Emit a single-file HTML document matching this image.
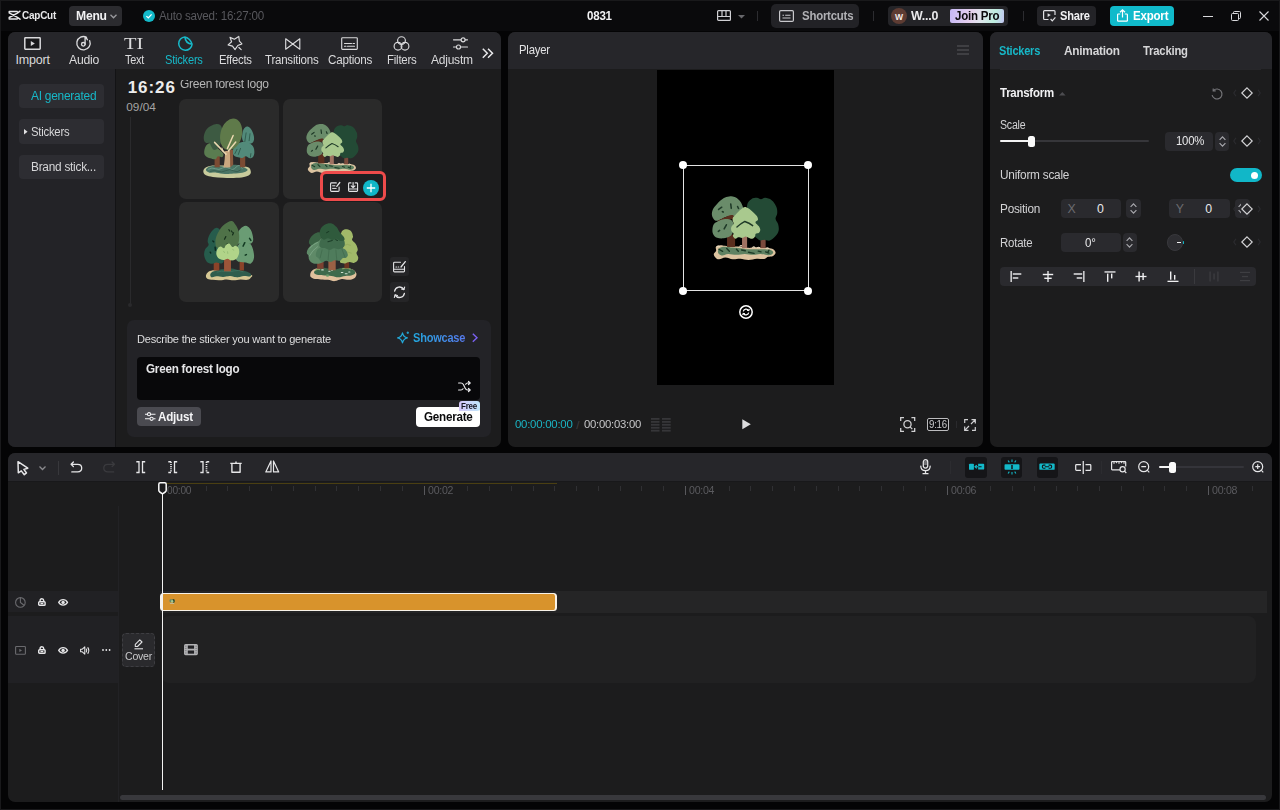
<!DOCTYPE html>
<html><head><meta charset="utf-8"><title>CapCut</title>
<style>
*{box-sizing:border-box;margin:0;padding:0}
html,body{width:1280px;height:810px;overflow:hidden;background:#040405;font-family:"Liberation Sans",sans-serif;color:#e6e6e8;font-size:12px}
.abs{position:absolute}
.panel{position:absolute;background:#1c1c1d;border-radius:7px;overflow:hidden}
.hdr{position:absolute;left:0;top:0;right:0;background:#232327}
svg{position:absolute;overflow:visible}
.t{position:absolute;white-space:nowrap;line-height:1}
.card{position:absolute;background:#2a2a2a;border-radius:7px;overflow:hidden}
.inp{position:absolute;background:#2a2a2e;border-radius:4px}

</style></head><body>
<div class="abs" style="left:0;top:0;width:1280px;height:810px;border:1px solid #19191b;pointer-events:none"></div>
<div id="topbar" class="abs" style="left:1px;top:1px;width:1278px;height:29.500px;background:#0a0a0c"></div><div class="abs" style="left:0;top:0;width:1280px;height:32px">
<svg style="left:7.5px;top:10px" width="13" height="10.5" viewBox="0 0 13 10.5" fill="none" stroke="#e8e8ea" stroke-width="1.45" stroke-linejoin="round" stroke-linecap="round"><path d="M1.2 1.5H9.2M1.2 8.9H9.2M1.2 1.5V2.9L9.4 7.3L12 9.2M1.2 8.9V7.5L9.4 3.1L12 1.2"/></svg>
<div class="t" style="left:22.0px;top:10.1px;font-size:11.5px;font-weight:bold;color:#e8e8ea;letter-spacing:-0.25px;transform:scaleX(0.865);transform-origin:0 0;">CapCut</div>
<div class="abs" style="left:69px;top:6px;width:53px;height:20px;background:#2b2b2f;border-radius:4px"></div>
<div class="t" style="left:76.0px;top:10.1px;font-size:12.5px;font-weight:bold;color:#f2f2f4;letter-spacing:-0.25px;transform:scaleX(0.972);transform-origin:0 0;">Menu</div>
<svg style="left:109.5px;top:13.5px" width="7" height="5" viewBox="0 0 7 5" fill="none" stroke="#9a9a9e" stroke-width="1.3"><path d="M0.5 0.8L3.5 3.8L6.5 0.8"/></svg>
<svg style="left:143px;top:10px" width="12" height="12" viewBox="0 0 12 12"><circle cx="6" cy="6" r="6" fill="#13b9c9"/><path d="M3.4 6.1L5.3 7.9L8.6 4.4" fill="none" stroke="#fff" stroke-width="1.3"/></svg>
<div class="t" style="left:159.3px;top:10.0px;font-size:12px;color:#58585d;letter-spacing:-0.25px;transform:scaleX(0.968);transform-origin:0 0;">Auto saved: 16:27:00</div>
<div class="t" style="left:586.8px;top:10.1px;font-size:12.5px;font-weight:bold;color:#f2f2f4;letter-spacing:-0.25px;transform:scaleX(0.924);transform-origin:0 0;">0831</div>
<svg style="left:717px;top:10px" width="14" height="11" viewBox="0 0 14 11" fill="none" stroke="#d0d0d4" stroke-width="1.2"><rect x="0.6" y="0.6" width="12.8" height="9.8" rx="1"/><path d="M0.6 6.5H13.4M5 0.6V6.5M9 0.6V6.5"/></svg>
<svg style="left:737.5px;top:14.5px" width="7" height="3.5" viewBox="0 0 7 3.5"><path d="M0 0H7L3.5 3.5Z" fill="#67676b"/></svg>
<div class="abs" style="left:757px;top:11px;width:1px;height:10px;background:#2c2c30"></div>
<div class="abs" style="left:771px;top:4px;width:88px;height:24px;background:#222226;border-radius:5px"></div>
<svg style="left:779px;top:10px" width="15" height="12" viewBox="0 0 15 12" fill="none" stroke="#c8c8cc" stroke-width="1.2"><rect x="0.6" y="0.6" width="13.8" height="10.8" rx="1.2"/><path d="M3.5 5.2H5M6.2 5.2H11.5M3.5 8H11.5" stroke-width="1.1"/></svg>
<div class="t" style="left:801.5px;top:10.1px;font-size:12.5px;font-weight:bold;color:#b0b0b4;letter-spacing:-0.25px;transform:scaleX(0.914);transform-origin:0 0;">Shortcuts</div>
<div class="abs" style="left:873px;top:11px;width:1px;height:10px;background:#2c2c30"></div>
<div class="abs" style="left:888px;top:6px;width:120px;height:20px;background:#242428;border-radius:4px"></div>
<div class="abs" style="left:891px;top:8px;width:16px;height:16px;border-radius:8px;background:#5e3c33"></div>
<div class="t" style="left:895.0px;top:12.7px;font-size:8.5px;font-weight:bold;color:#f4ecea;letter-spacing:0.00px;">W</div>
<div class="t" style="left:910.7px;top:10.1px;font-size:12.5px;font-weight:bold;color:#e8e8ea;letter-spacing:-0.25px;transform:scaleX(0.994);transform-origin:0 0;">W...0</div>
<div class="abs" style="left:950px;top:9px;width:54px;height:14px;border-radius:2px;background:linear-gradient(100deg,#c6b8f6 0%,#e6d0ee 38%,#dfe6ec 58%,#bdeede 82%,#c2c4f2 100%)"></div>
<div class="t" style="left:955.0px;top:10.4px;font-size:12px;font-weight:bold;color:#0a0a0c;letter-spacing:-0.25px;transform:scaleX(0.962);transform-origin:0 0;">Join Pro</div>
<div class="abs" style="left:1023px;top:11px;width:1px;height:10px;background:#2c2c30"></div>
<div class="abs" style="left:1037px;top:6px;width:59px;height:20px;background:#232327;border-radius:4px"></div>
<svg style="left:1043px;top:10px" width="13" height="12" viewBox="0 0 13 12" fill="none" stroke="#e0e0e4" stroke-width="1.2"><path d="M12 5V1.6Q12 0.7 11.1 0.7H1.5Q0.6 0.7 0.6 1.6V8.6Q0.6 9.5 1.5 9.5H5.5"/><path d="M4.6 3.2V7L7.8 5.1Z" fill="#e0e0e4" stroke="none"/><path d="M7.6 9L9.3 10.8L12.4 7.4"/></svg>
<div class="t" style="left:1060.0px;top:10.1px;font-size:12.5px;font-weight:bold;color:#f2f2f4;letter-spacing:-0.25px;transform:scaleX(0.889);transform-origin:0 0;">Share</div>
<div class="abs" style="left:1110px;top:6px;width:64px;height:20px;background:#10bacb;border-radius:4px"></div>
<svg style="left:1117px;top:9px" width="11" height="13" viewBox="0 0 11 13" fill="none" stroke="#fff" stroke-width="1.2"><path d="M3.2 5H1.4Q0.6 5 0.6 5.8V11.4Q0.6 12.2 1.4 12.2H9.6Q10.4 12.2 10.4 11.4V5.8Q10.4 5 9.6 5H7.8"/><path d="M5.5 8.6V1M3 3.3L5.5 0.9L8 3.3"/></svg>
<div class="t" style="left:1133.0px;top:10.1px;font-size:12.5px;font-weight:bold;color:#ffffff;letter-spacing:-0.25px;transform:scaleX(0.926);transform-origin:0 0;">Export</div>
<div class="abs" style="left:1203px;top:16px;width:10px;height:1px;background:#d8d8dc"></div>
<svg style="left:1231px;top:11px" width="10" height="10" viewBox="0 0 10 10" fill="none" stroke="#d8d8dc" stroke-width="1"><rect x="0.5" y="2.5" width="7" height="7" rx="1"/><path d="M2.5 2.5V1.5Q2.5 0.5 3.5 0.5H8.5Q9.5 0.5 9.5 1.5V6.5Q9.5 7.5 8.5 7.5H7.5"/></svg>
<svg style="left:1259px;top:11px" width="10" height="10" viewBox="0 0 10 10" fill="none" stroke="#d8d8dc" stroke-width="1.1"><path d="M0.5 0.5L9.5 9.5M9.5 0.5L0.5 9.5"/></svg>
</div>
<div class="panel" style="left:8px;top:32px;width:493px;height:415px"><div class="abs" style="left:-8px;top:-32px;width:1280px;height:810px">
<div class="abs" style="left:8px;top:32px;width:493px;height:37px;background:#26262a"></div>
<div class="abs" style="left:8px;top:69px;width:107px;height:378px;background:#232327"></div>
<div class="abs" style="left:115px;top:69px;width:1px;height:378px;background:#131315"></div>
<svg style="left:24.200px;top:36.900px" width="17" height="13" viewBox="0 0 17 13" fill="none" stroke="#dadadc" stroke-width="1.500" stroke-linejoin="round"><rect x="0.800" y="0.800" width="15.400" height="11.400" rx="0.600" fill="#19191b"/><path d="M6.800 4.100V8.900L10.800 6.500Z" fill="#dadadc" stroke="none"/></svg>
<div class="t" style="left:15.4px;top:54.4px;font-size:12.5px;color:#dadadc;letter-spacing:-0.17px;">Import</div>
<svg style="left:76.100px;top:36.400px" width="15" height="15" viewBox="0 0 15 15" fill="none" stroke="#dadadc" stroke-width="1.350" stroke-linejoin="round" stroke-linecap="round"><path d="M10.600 1.300A6.700 6.700 0 1 0 13.700 4.700"/><circle cx="7.300" cy="8.300" r="1.800"/><path d="M9.100 8.300V1.500Q10.600 1.800 11.400 3.800"/></svg>
<div class="t" style="left:68.5px;top:54.0px;font-size:12.5px;color:#dadadc;letter-spacing:-0.25px;transform:scaleX(0.978);transform-origin:0 0;">Audio</div>
<div class="t" style="left:124.3px;top:35.1px;font-size:17.2px;font-family:'Liberation Serif',serif;color:#dadadc;letter-spacing:0.00px;transform:scaleX(1.19);transform-origin:0 0;">TI</div>
<div class="t" style="left:124.6px;top:54.0px;font-size:12.5px;color:#dadadc;letter-spacing:-0.25px;transform:scaleX(0.875);transform-origin:0 0;">Text</div>
<svg style="left:177.500px;top:36px" width="15" height="15" viewBox="0 0 15 15" fill="none" stroke="#17b8c8" stroke-width="1.500" stroke-linejoin="round" stroke-linecap="round"><path d="M14.100 8.200A6.700 6.700 0 1 1 6.900 0.900Q12.300 2.300 14.100 8.200M6.900 0.900Q7.400 7.700 14.100 8.200"/></svg>
<div class="t" style="left:165.4px;top:54.0px;font-size:12.5px;color:#17b8c8;letter-spacing:-0.25px;transform:scaleX(0.888);transform-origin:0 0;">Stickers</div>
<svg style="left:227px;top:35px" width="16" height="16" viewBox="0 0 16 16" fill="none" stroke="#dadadc" stroke-width="1.150" stroke-linejoin="round" stroke-linecap="round"><path d="M3 2.400L7.400 4.250L11.750 1.400L12.400 6.100L14.900 8.900L10.800 10.500L8 14.600L5.500 11.100L1.100 9.900L4.600 6.750Z"/><path d="M11.900 12.500L14.200 14.600" stroke-width="1.200"/></svg>
<div class="t" style="left:218.5px;top:54.0px;font-size:12.5px;color:#dadadc;letter-spacing:-0.25px;transform:scaleX(0.905);transform-origin:0 0;">Effects</div>
<svg style="left:285px;top:37.500px" width="15.500" height="12" viewBox="0 0 15.500 12" fill="none" stroke="#dadadc" stroke-width="1.15" stroke-linejoin="round" stroke-linecap="round"><path d="M0.700 0.800V11.200L7.750 6ZM14.800 0.800V11.200L7.750 6Z"/></svg>
<div class="t" style="left:265.3px;top:54.0px;font-size:12.5px;color:#dadadc;letter-spacing:-0.25px;transform:scaleX(0.923);transform-origin:0 0;">Transitions</div>
<svg style="left:341px;top:37px" width="17" height="13" viewBox="0 0 17 13" fill="none" stroke="#dadadc" stroke-width="1.15" stroke-linejoin="round" stroke-linecap="round"><rect x="0.700" y="0.700" width="15.600" height="11.600" rx="0.800"/><path d="M3.500 6.500H10.500M12 6.500H13.500M3.500 9.300H5M6.500 9.300H13.500" stroke-width="1.100"/></svg>
<div class="t" style="left:327.8px;top:54.0px;font-size:12.5px;color:#dadadc;letter-spacing:-0.25px;transform:scaleX(0.933);transform-origin:0 0;">Captions</div>
<svg style="left:393px;top:36px" width="17" height="15" viewBox="0 0 17 15" fill="none" stroke="#dadadc" stroke-width="1.15" stroke-linejoin="round" stroke-linecap="round"><circle cx="8.500" cy="4.600" r="3.900"/><circle cx="5" cy="10.200" r="3.900"/><circle cx="12" cy="10.200" r="3.900"/></svg>
<div class="t" style="left:386.9px;top:54.0px;font-size:12.5px;color:#dadadc;letter-spacing:-0.25px;transform:scaleX(0.916);transform-origin:0 0;">Filters</div>
<svg style="left:452.500px;top:37px" width="15" height="13" viewBox="0 0 15 13" fill="none" stroke="#dadadc" stroke-width="1.15" stroke-linejoin="round" stroke-linecap="round"><path d="M0.500 2.800H8M12.200 2.800H14.500M0.500 10H3.400M7.600 10H14.500"/><circle cx="10.100" cy="2.800" r="2"/><circle cx="5.500" cy="10" r="2"/></svg>
<div class="t" style="left:431.2px;top:54.0px;font-size:12.5px;color:#dadadc;letter-spacing:-0.25px;transform:scaleX(0.962);transform-origin:0 0;">Adjustm</div>
<svg style="left:482px;top:48px" width="11.500" height="10.500" viewBox="0 0 11.500 10.500" fill="none" stroke="#e8e8ea" stroke-width="1.500" stroke-linejoin="miter"><path d="M0.800 0.800L5.300 5.250L0.800 9.700M6 0.800L10.500 5.250L6 9.700"/></svg>
<div class="abs" style="left:19px;top:83.5px;width:85px;height:24.500px;background:#2d2d32;border-radius:4px"></div>
<div class="abs" style="left:19px;top:119px;width:85px;height:24.500px;background:#2d2d32;border-radius:4px"></div>
<div class="abs" style="left:19px;top:154.5px;width:85px;height:24.500px;background:#2d2d32;border-radius:4px"></div>
<div class="t" style="left:31.1px;top:90.1px;font-size:12px;color:#17b8c8;letter-spacing:-0.25px;transform:scaleX(0.993);transform-origin:0 0;">AI generated</div>
<svg style="left:23.600px;top:129.300px" width="3.600" height="5.600" viewBox="0 0 3.600 5.600"><path d="M0 0L3.600 2.800L0 5.600Z" fill="#e0e0e2"/></svg>
<div class="t" style="left:31.1px;top:125.7px;font-size:12px;color:#d6d6d8;letter-spacing:-0.25px;transform:scaleX(0.943);transform-origin:0 0;">Stickers</div>
<div class="t" style="left:31.1px;top:161.3px;font-size:12px;color:#d6d6d8;letter-spacing:-0.25px;transform:scaleX(0.986);transform-origin:0 0;">Brand stick...</div>
<div class="abs" style="left:116px;top:79.500px;width:385px;height:19px;overflow:hidden"><div class="abs" style="left:-116px;top:-79.500px;width:1280px;height:810px">
<div class="t" style="left:127.7px;top:78.5px;font-size:17px;font-weight:bold;color:#ececec;letter-spacing:0.95px;">16:26</div>
<div class="t" style="left:179.8px;top:77.7px;font-size:12.3px;color:#b6b6b6;letter-spacing:-0.25px;transform:scaleX(0.978);transform-origin:0 0;">Green forest logo</div>
</div></div>
<div class="t" style="left:126.3px;top:101.5px;font-size:11.8px;color:#a4a4a4;letter-spacing:-0.01px;">09/04</div>
<div class="abs" style="left:129.700px;top:117px;width:1.200px;height:187px;background:#2a2a2c"></div>
<div class="abs" style="left:128.300px;top:303px;width:4px;height:4px;border-radius:2px;background:#2a2a2c"></div>
<div class="card" style="left:179px;top:99px;width:100px;height:100px"><svg style="left:20px;top:14px" width="60" height="70" viewBox="0 0 694 810">
<path d="M50 680C48 664 55 647 70 635C85 623 106 617 130 612C154 607 147 607 200 607C253 607 354 609 420 612C486 615 527 614 560 625C593 636 593 654 598 670C603 686 599 702 585 715C571 728 554 735 520 742C486 749 444 751 400 752C356 753 324 752 280 750C236 748 197 746 160 740C123 734 100 731 80 720C60 709 52 696 50 680Z" fill="#c8cb9c"/>
<path d="M80 660C78 648 92 634 110 625C128 616 152 612 180 610C208 608 232 612 260 615C288 618 304 628 330 625C356 622 374 603 400 600C426 597 444 603 470 610C496 617 524 630 540 640C556 650 567 656 560 665C553 674 529 684 500 690C471 696 437 697 400 700C363 703 337 707 300 705C263 703 233 693 200 690C167 687 142 696 120 690C98 684 82 672 80 660Z" fill="#4a7565"/>
<path d="M110 650q40-25 80-5t80-8 80 4 80-15 70 15" stroke="#78a593" stroke-width="9" stroke-linecap="round" stroke-linejoin="round" fill="none"/>
<path d="M130 675q50-18 90 0t90-8 90 2 80-8" stroke="#33584a" stroke-width="9" stroke-linecap="round" stroke-linejoin="round" fill="none"/>
<rect x="180" y="480" width="60" height="148" fill="#7b4b33"/>
<rect x="475" y="490" width="60" height="138" fill="#7b4b33"/>
<path d="M60 460C59 440 64 410 75 390C86 370 101 354 120 350C139 346 160 357 180 370C200 383 212 402 230 420C248 438 273 454 280 470C287 486 281 504 270 510C259 516 235 495 220 500C205 505 206 530 190 535C174 540 150 531 130 525C110 519 93 512 80 500C67 488 61 480 60 460Z" fill="#5a7c50"/>
<path d="M55 300C53 277 58 246 70 220C82 194 98 176 120 160C142 144 167 134 190 130C213 126 230 127 245 140C260 153 266 172 270 200C274 228 272 262 268 290C264 318 260 328 250 350C240 372 230 396 215 410C200 424 184 430 170 425C156 420 149 400 140 385C131 370 131 352 120 345C109 338 92 353 80 345C68 337 57 323 55 300Z" fill="#3d5a42"/>
<path d="M500 300C495 277 500 244 505 220C510 196 518 181 530 170C542 159 555 154 570 160C585 166 598 180 610 200C622 220 631 246 635 270C639 294 638 314 630 330C622 346 608 352 590 355C572 358 546 355 530 345C514 335 505 323 500 300Z" fill="#528a7a"/>
<path d="M390 440C394 421 404 398 420 380C436 362 454 347 480 340C506 333 534 333 560 340C586 347 605 362 620 380C635 398 638 418 640 440C642 462 639 484 630 500C621 516 606 525 590 525C574 525 556 501 540 500C524 499 518 518 500 520C482 522 458 516 440 510C422 504 409 498 400 485C391 472 386 459 390 440Z" fill="#528a7a"/>
<path d="M545 230l-15 100M590 240l-10 80M440 420l-25 50M480 410l-25 70M600 470l-5 40" stroke="#2f5c4d" stroke-width="11" stroke-linecap="round" stroke-linejoin="round" fill="none"/>
<ellipse cx="372" cy="248" rx="124" ry="186" fill="#5f7a4a" transform="rotate(14 372 248)"/>
<path d="M352 425H392L396 600L362 632Z" fill="#8a5a3e"/>
<path d="M303 440H357L362 632H285Q300 540 303 440Z" fill="#caa880"/>
<path d="M312 476L180 340M328 412L395 260M340 440L425 335" stroke="#ead8b0" stroke-width="17" stroke-linecap="round" stroke-linejoin="round" fill="none"/>
<path d="M265 405l10 35" stroke="#ead8b0" stroke-width="12" stroke-linecap="round" stroke-linejoin="round" fill="none"/>
</svg></div>
<div class="card" style="left:283px;top:99px;width:99px;height:100px"><svg style="left:17.8px;top:20.1px" width="62.300" height="58.400" viewBox="0 0 864 810">
<path d="M95 690C97 677 116 669 120 655C124 641 110 626 118 615C126 604 147 599 165 597C183 595 194 601 215 603C236 605 250 608 280 610C310 612 345 609 380 612C415 615 440 624 470 625C500 626 514 618 545 618C576 618 612 623 640 625C668 627 681 624 700 628C719 632 734 635 745 645C756 655 764 668 762 680C760 692 750 704 735 712C720 720 697 716 680 722C663 728 662 741 640 745C618 749 591 740 560 742C529 744 503 756 470 756C437 756 411 743 380 742C349 741 329 751 300 748C271 745 248 728 220 728C192 728 170 749 150 748C130 747 120 736 110 725C100 714 93 703 95 690Z" fill="#dcc3a0"/>
<path d="M140 660C142 648 146 634 160 625C174 616 189 613 215 612C241 611 270 619 300 622C330 625 349 625 380 628C411 631 437 638 470 640C503 642 527 640 560 640C593 640 622 638 650 640C678 642 699 643 715 650C731 657 740 670 735 680C730 690 715 703 690 705C665 707 631 691 600 690C569 689 551 700 520 700C489 700 463 690 430 690C397 690 373 700 340 700C307 700 278 689 250 690C222 691 208 708 190 708C172 708 159 699 150 690C141 681 138 672 140 660Z" fill="#5f8262"/>
<path d="M150 640l40 22M235 632l28 30M340 640l20 22M395 648l40 8M470 672l60 12M575 660l30 8M655 668l35 14M690 650l-8 18" stroke="#1c3a26" stroke-width="15" stroke-linecap="round" fill="none"/>
<path d="M128 612q14-14 30 0M375 608q14-14 30 0M515 620q12-12 24 0M565 624q14-12 28 0M660 628q14-10 28 2" stroke="#eadcc0" stroke-width="11" fill="none" stroke-linecap="round"/>
<rect x="238" y="480" width="87" height="135" fill="#5a2e1e"/>
<rect x="600" y="530" width="55" height="98" fill="#7a4a3c"/>
<path d="M455 165C460 128 481 115 500 100C519 85 541 85 560 85C579 85 588 100 605 100C622 100 629 83 650 85C671 87 698 93 720 110C742 127 759 154 770 180C781 206 781 226 780 250C779 274 760 288 762 310C764 332 784 346 790 370C796 394 800 416 795 440C790 464 777 481 760 500C743 519 722 538 700 545C678 552 658 538 640 538C622 538 615 548 600 545C585 542 575 534 560 520C545 506 536 510 520 470C504 430 482 356 470 300C458 244 450 202 455 165Z" fill="#234a35"/>
<path d="M75 270C73 251 75 232 85 210C95 188 109 172 130 150C151 128 176 105 200 90C224 75 238 73 260 70C282 67 300 68 320 75C340 82 354 93 370 110C386 127 397 148 405 170C413 192 417 211 412 230C407 249 401 262 380 272C359 282 326 279 300 282C274 285 262 282 240 287C218 292 200 304 180 312C160 320 146 331 130 332C114 333 105 326 95 315C85 304 77 289 75 270Z" fill="#6a8c6a"/>
<path d="M140 332C152 324 218 291 240 283C262 275 296 268 305 272C314 276 314 306 305 312C296 318 261 314 240 318C219 322 163 343 150 345C137 347 128 340 140 332Z" fill="#5a2e1e"/>
<path d="M80 430C81 410 84 387 95 370C106 353 121 347 140 337C159 327 178 321 200 317C222 313 242 312 260 317C278 322 290 327 300 342C310 357 312 378 312 400C312 422 308 442 300 460C292 478 288 489 270 500C252 511 226 519 200 522C174 525 150 523 130 515C110 507 99 496 90 480C81 464 79 450 80 430Z" fill="#6a8c6a"/>
<path d="M147 210l34-24M278 152l6 46M352 178l10 22M207 420l24-44M144 446l14-10M188 234l10 4" stroke="#1f3a28" stroke-width="17" stroke-linecap="round" fill="none"/>
<rect x="400" y="470" width="55" height="158" fill="#a07262"/>
<path d="M430 183C442 183 457 190 472 200C487 210 505 226 520 240C535 254 551 268 560 282C569 296 574 311 572 322C570 333 543 338 545 350C547 362 573 378 582 392C591 406 597 420 597 432C597 444 588 458 580 465C572 472 555 466 548 472C541 478 546 493 540 502C534 511 522 525 510 527C498 529 482 519 470 515C458 511 452 502 440 502C428 502 413 516 400 517C387 518 372 508 360 510C348 512 340 529 330 527C320 525 306 510 302 500C298 490 311 480 308 470C305 460 288 452 284 440C280 428 280 412 284 400C288 388 308 377 310 365C312 353 299 341 298 330C297 319 297 308 302 298C307 288 319 280 330 268C341 256 358 236 370 225C382 214 390 207 400 200C410 193 418 183 430 183Z" fill="#a9c98e"/>
<path d="M345 400Q385 365 430 340Q478 355 515 385" stroke="#1f3a28" stroke-width="15" fill="none" stroke-linecap="round" stroke-linejoin="round"/>
</svg></div>
<div class="card" style="left:179px;top:202px;width:100px;height:100px"><svg style="left:20px;top:13px" width="60" height="70" viewBox="0 0 694 810">
<path d="M80 710C79 697 84 682 95 670C106 658 119 650 140 645C161 640 162 639 210 640C258 641 328 641 400 650C472 659 564 676 600 690C636 704 605 714 598 725C591 736 582 746 560 750C538 754 509 744 480 745C451 746 429 755 400 755C371 755 349 745 320 745C291 745 269 754 240 755C211 756 186 753 160 750C134 747 115 747 100 740C85 733 81 723 80 710Z" fill="#d6c894"/>
<path d="M130 690C132 678 142 665 160 655C178 645 204 640 230 635C256 630 272 628 300 625C328 622 351 617 380 620C409 623 431 634 460 640C489 646 515 643 540 650C565 657 589 669 598 680C607 691 604 707 590 712C576 717 548 703 520 705C492 707 469 722 440 722C411 722 389 706 360 705C331 704 309 716 280 717C251 718 224 709 200 710C176 711 163 726 150 722C137 718 128 702 130 690Z" fill="#2f5d4d"/>
<path d="M150 735q20-22 42 0 22-22 46-4M290 730q26-18 52 0M400 735q22-18 46 0 22-16 44 0M520 728q18-14 40 0" stroke="#d6c894" stroke-width="13" stroke-linecap="round" stroke-linejoin="round" fill="none"/>
<path d="M210 660q50-18 100-8t100-6 100 10" stroke="#3f7361" stroke-width="10" stroke-linecap="round" stroke-linejoin="round" fill="none"/>
<rect x="170" y="540" width="65" height="102" fill="#8b4329"/>
<rect x="470" y="520" width="50" height="122" fill="#8b4329"/>
<path d="M60 470C56 444 61 422 70 400C79 378 104 368 110 350C116 332 98 322 100 300C102 278 108 254 120 230C132 206 148 185 165 170C182 155 199 145 215 150C231 155 242 162 250 195C258 228 251 289 258 330C265 371 284 385 290 420C296 455 296 494 290 520C284 546 276 554 260 560C244 566 220 549 200 550C180 551 170 567 150 565C130 563 106 557 90 540C74 523 64 496 60 470Z" fill="#265c4c"/>
<path d="M160 300l10 10M186 372l4 36M130 430l5 10" stroke="#0d2a20" stroke-width="17" stroke-linecap="round" stroke-linejoin="round" fill="none"/>
<path d="M430 300C426 281 431 256 440 230C449 204 462 179 480 160C498 141 520 125 540 125C560 125 575 141 590 160C605 179 614 204 620 230C626 256 630 281 625 300C620 319 609 328 590 332C571 336 544 322 520 322C496 322 476 336 460 332C444 328 434 319 430 300Z" fill="#6a9c74"/>
<path d="M420 480C418 456 421 428 430 400C439 372 450 345 470 330C490 315 516 316 540 318C564 320 584 321 600 340C616 359 624 391 630 420C636 449 640 474 635 500C630 526 617 551 600 560C583 569 562 553 540 550C518 547 498 549 480 545C462 541 451 542 440 530C429 518 422 504 420 480Z" fill="#6a9c74"/>
<path d="M585 270l15 25M530 320l-20 40M535 465l13-7" stroke="#123a22" stroke-width="17" stroke-linecap="round" stroke-linejoin="round" fill="none"/>
<path d="M375 70C397 71 405 90 420 110C435 130 447 152 455 180C463 208 466 231 465 260C464 289 462 314 450 340C438 366 428 389 400 400C372 411 335 404 300 400C265 396 230 395 210 380C190 365 192 344 190 320C188 296 191 278 200 250C209 222 222 197 240 170C258 143 275 123 300 105C325 87 353 69 375 70Z" fill="#4f7248"/>
<path d="M345 170l10 15M375 185l10 15M400 205l-12 25M310 250l-15 30M325 335l10 15" stroke="#16301c" stroke-width="14" stroke-linecap="round" stroke-linejoin="round" fill="none"/>
<rect x="290" y="490" width="80" height="162" fill="#9b5539"/>
<path d="M200 440C201 424 206 404 215 390C224 376 236 366 250 365C264 364 279 388 290 385C301 382 299 360 310 350C321 340 336 326 350 330C364 334 372 365 385 370C398 375 407 353 420 355C433 357 447 366 455 380C463 394 466 412 465 430C464 448 458 464 450 480C442 496 435 507 420 515C405 523 386 527 370 525C354 523 345 506 330 505C315 504 306 519 290 520C274 521 255 517 240 510C225 503 217 493 210 480C203 467 199 456 200 440Z" fill="#b1d489"/>
<path d="M285 420l10 15M330 425l3 20M390 400l12 6" stroke="#8fb870" stroke-width="9" stroke-linecap="round" stroke-linejoin="round" fill="none"/>
</svg></div>
<div class="card" style="left:283px;top:202px;width:99px;height:100px"><svg style="left:19px;top:13px" width="60" height="70" viewBox="0 0 694 810">
<path d="M95 690C96 677 100 662 110 650C120 638 134 630 150 625C166 620 154 617 200 620C246 623 334 639 400 640C466 641 520 621 560 625C600 629 608 646 620 660C632 674 632 686 628 700C624 714 616 726 600 735C584 744 566 749 540 750C514 751 489 737 460 740C431 743 409 763 380 765C351 767 329 754 300 750C271 746 248 747 220 745C192 743 171 745 150 740C129 735 115 729 105 720C95 711 94 703 95 690Z" fill="#e1c19d"/>
<path d="M140 670C135 658 148 641 165 630C182 619 205 614 230 612C255 610 272 617 300 620C328 623 351 631 380 630C409 629 431 615 460 612C489 609 514 610 540 615C566 620 586 629 600 640C614 651 620 664 615 675C610 686 591 694 570 700C549 706 528 701 500 705C472 709 449 720 420 720C391 720 369 709 340 705C311 701 288 702 260 700C232 698 212 700 190 695C168 690 145 682 140 670Z" fill="#3f6a4c"/>
<path d="M155 640q25-18 50-8M470 622q45-12 90 4" stroke="#8aa868" stroke-width="13" stroke-linecap="round" stroke-linejoin="round" fill="none"/>
<path d="M228 635h18M310 650h14M342 640h10M455 665h18M500 680h22M540 660h14" stroke="#cfe0d0" stroke-width="12" stroke-linecap="round" stroke-linejoin="round" fill="none"/>
<ellipse cx="295" cy="700" rx="18" ry="14" fill="#6a9a6a"/>
<rect x="175" y="520" width="75" height="102" fill="#7b4131"/>
<rect x="490" y="520" width="55" height="97" fill="#6b3521"/>
<rect x="305" y="500" width="85" height="140" fill="#9b6145"/>
<path d="M440 540C438 524 444 499 450 470C456 441 468 411 470 380C472 349 464 328 460 300C456 272 448 252 450 230C452 208 457 192 470 180C483 168 502 163 520 165C538 167 557 174 570 190C583 206 588 232 590 250C592 268 574 274 580 290C586 306 613 320 625 340C637 360 644 382 645 400C646 418 629 424 630 440C631 456 648 474 650 490C652 506 649 518 640 530C631 542 616 552 600 555C584 558 568 544 550 545C532 546 516 558 500 560C484 562 471 559 460 555C449 551 442 556 440 540Z" fill="#a1b969"/>
<path d="M490 350q35-22 70 0M480 440q45-26 90 0" stroke="#93ab5e" stroke-width="11" stroke-linecap="round" stroke-linejoin="round" fill="none"/>
<path d="M55 440C54 425 60 408 70 390C80 372 95 358 110 340C125 322 134 303 150 290C166 277 182 270 200 270C218 270 239 266 250 290C261 314 259 358 260 400C261 442 262 492 255 520C248 548 237 547 220 555C203 563 180 566 160 565C140 564 125 560 110 550C95 540 86 525 80 510C74 495 80 483 75 470C70 457 56 455 55 440Z" fill="#5f8a68"/>
<path d="M80 320C78 304 87 279 100 260C113 241 132 226 150 215C168 204 186 195 200 200C214 205 224 223 225 240C226 257 219 277 205 292C191 307 167 312 150 322C133 332 123 347 110 347C97 347 82 336 80 320Z" fill="#3a6244"/>
<path d="M90 385q35-45 90-68M85 475q35-70 95-108" stroke="#7aa484" stroke-width="11" stroke-linecap="round" stroke-linejoin="round" fill="none"/>
<path d="M160 470C158 452 165 418 180 400C195 382 212 376 240 370C268 364 295 369 330 370C365 371 399 370 430 375C461 380 482 384 500 400C518 416 528 443 530 460C532 477 521 488 510 495C499 502 483 494 470 500C457 506 456 525 440 530C424 535 400 522 380 525C360 528 348 544 330 545C312 546 298 530 280 530C262 530 246 550 230 545C214 540 203 514 190 500C177 486 162 488 160 470Z" fill="#4f7c5c"/>
<path d="M232 405l-22 90M312 405l-10 115M392 405l10 115M462 395l34 90" stroke="#436e50" stroke-width="11" stroke-linecap="round" stroke-linejoin="round" fill="none"/>
<path d="M200 350C198 334 204 310 215 290C226 270 237 251 260 240C283 229 309 230 340 230C371 230 404 231 430 240C456 249 468 262 480 280C492 298 497 322 495 340C493 358 484 370 470 380C456 390 438 394 420 395C402 396 388 383 370 385C352 387 338 405 320 405C302 405 287 390 270 385C253 380 238 386 225 380C212 374 202 366 200 350Z" fill="#3f6a4c"/>
<path d="M205 200C208 180 214 158 230 140C246 122 268 107 290 100C312 93 330 93 350 100C370 107 385 124 400 140C415 156 415 170 430 190C445 210 469 232 480 250C491 268 497 281 490 290C483 299 456 303 440 300C424 297 416 277 400 275C384 273 368 291 350 290C332 289 318 271 300 270C282 269 266 289 250 285C234 281 223 266 215 250C207 234 202 220 205 200Z" fill="#2f5a3c"/>
<path d="M285 205l25-15M300 310l50-15M390 285l20 10" stroke="#1a3c26" stroke-width="12" stroke-linecap="round" stroke-linejoin="round" fill="none"/>
</svg></div>
<div class="abs" style="left:320px;top:171px;width:65.500px;height:30px;border:3px solid #ee4b4b;border-radius:6px;background:#1f1f21"></div>
<svg style="left:330px;top:182.300px" width="10.500" height="10" viewBox="0 0 10.500 10" fill="none" stroke="#e4e4e6" stroke-width="1.100" stroke-linejoin="round" stroke-linecap="round"><path d="M6.300 0.900H1.500Q0.600 0.900 0.600 1.800V8.500Q0.600 9.400 1.500 9.400H8.200Q9.100 9.400 9.100 8.500V5"/><path d="M2.600 3.800H5M2.600 6.400H6.200" stroke-width="1"/><path d="M9.800 0.500L6.800 4.400" stroke-width="1.300"/></svg>
<svg style="left:347.700px;top:182.300px" width="10.200" height="10" viewBox="0 0 10.200 10" fill="none" stroke="#e4e4e6" stroke-width="1.100" stroke-linejoin="round" stroke-linecap="round"><path d="M3 0.900H1.500Q0.600 0.900 0.600 1.800V8.500Q0.600 9.400 1.500 9.400H8.700Q9.600 9.400 9.600 8.500V1.800Q9.600 0.900 8.700 0.900H7.200"/><path d="M5.100 0.500V5.400M3.200 3.800L5.100 5.700L7 3.800" stroke-width="1.200"/><path d="M0.600 7H9.600" stroke-width="1"/></svg>
<svg style="left:362.500px;top:179.500px" width="16" height="16" viewBox="0 0 16 16"><circle cx="8" cy="8" r="8" fill="#11b7c8"/><path d="M8 3.800V12.200M3.800 8H12.200" stroke="#fff" stroke-width="1.300"/></svg>
<div class="abs" style="left:389.500px;top:256.500px;width:19.500px;height:19.500px;background:#252527;border-radius:3px"></div>
<svg style="left:393px;top:260.500px" width="13" height="11.500" viewBox="0 0 13 11.500" fill="none" stroke="#e4e4e6" stroke-width="1.100" stroke-linejoin="round" stroke-linecap="round"><path d="M7.500 1.300H1.500Q0.600 1.300 0.600 2.200V10Q0.600 10.900 1.500 10.900H10.600Q11.500 10.900 11.500 10V5.500"/><path d="M0.600 8.300H11.500" /><path d="M3 6H3.500M5.200 6H5.700" stroke-width="1.200"/><path d="M12.300 0.600L8 6" stroke-width="1.300"/></svg>
<div class="abs" style="left:389.500px;top:282px;width:19.500px;height:19.500px;background:#252527;border-radius:3px"></div>
<svg style="left:392.700px;top:285.500px" width="13" height="12.500" viewBox="0 0 13 12.500" fill="none" stroke="#e4e4e6" stroke-width="1.100" stroke-linejoin="round" stroke-linecap="round" stroke-width="1.300"><path d="M1.600 5.200A5 5 0 0 1 10.800 3.400M11.400 7.300A5 5 0 0 1 2.200 9.100" stroke-width="1.300"/><path d="M11.600 1.200L10.900 3.700L8.500 3M1.400 11.300L2.100 8.800L4.500 9.500" stroke-width="1.200"/></svg>
<div class="abs" style="left:126.500px;top:320px;width:364.500px;height:116.500px;background:#232327;border-radius:7px"></div>
<div class="t" style="left:137.0px;top:334.1px;font-size:11.8px;color:#dededf;letter-spacing:-0.25px;transform:scaleX(0.938);transform-origin:0 0;">Describe the sticker you want to generate</div>
<svg style="left:396.500px;top:330.500px" width="13" height="13" viewBox="0 0 13 13" fill="none" stroke="#23a8d8" stroke-width="1.200" stroke-linejoin="round"><path d="M5.500 1.800Q6.300 6 10.400 6.900Q6.300 7.800 5.500 12Q4.700 7.800 0.600 6.900Q4.700 6 5.500 1.800Z"/><path d="M10.800 0.500V3M9.600 1.750H12" stroke-width="1"/></svg>
<div class="t" style="left:413.2px;top:331.7px;font-size:12.5px;font-weight:bold;color:transparent;letter-spacing:-0.25px;transform:scaleX(0.882);transform-origin:0 0;background:linear-gradient(90deg,#22a8e0,#5a78f0);-webkit-background-clip:text;background-clip:text;padding-right:3px;">Showcase</div>
<svg style="left:471.500px;top:333px" width="6" height="9.500" viewBox="0 0 6 9.500" fill="none" stroke="#7a60f0" stroke-width="1.400"><path d="M0.800 0.700L5 4.750L0.800 8.800"/></svg>
<div class="abs" style="left:137px;top:357px;width:343px;height:42.500px;background:#08080a;border-radius:4px"></div>
<div class="t" style="left:145.8px;top:363.4px;font-size:12.3px;font-weight:bold;color:#e6e6e8;letter-spacing:-0.25px;transform:scaleX(0.951);transform-origin:0 0;">Green forest logo</div>
<svg style="left:457.500px;top:380.500px" width="13" height="11" viewBox="0 0 13 11" fill="none" stroke="#e8e8ea" stroke-width="1.200" stroke-linecap="round" stroke-linejoin="round"><path d="M0.600 2H3Q4.500 2 5.400 3.500L7.200 7.300Q8 9 9.500 9H12M0.600 9H3Q4.300 9 5 7.800M7.700 3.300Q8.400 2 9.500 2H12M10.500 0.500L12.200 2L10.500 3.500M10.500 7.500L12.200 9L10.500 10.500"/></svg>
<div class="abs" style="left:137px;top:406.500px;width:64px;height:19.500px;background:#4a4a50;border-radius:4px"></div>
<svg style="left:145px;top:412px" width="10.500" height="9" viewBox="0 0 10.500 9" fill="none" stroke="#f2f2f4" stroke-width="1.100"><path d="M0 2.200H2.200M5.800 2.200H10.500M0 6.800H4.800M8.400 6.800H10.500"/><circle cx="4" cy="2.200" r="1.600"/><circle cx="6.600" cy="6.800" r="1.600"/></svg>
<div class="t" style="left:157.5px;top:410.5px;font-size:12.5px;font-weight:bold;color:#f4f4f6;letter-spacing:-0.25px;transform:scaleX(0.930);transform-origin:0 0;">Adjust</div>
<div class="abs" style="left:415.800px;top:407px;width:64.200px;height:19.500px;background:#ffffff;border-radius:4px"></div>
<div class="t" style="left:423.7px;top:410.7px;font-size:12.5px;font-weight:bold;color:#0a0a0c;letter-spacing:-0.25px;transform:scaleX(0.931);transform-origin:0 0;">Generate</div>
<div class="abs" style="left:459px;top:400.500px;width:21px;height:10.500px;border-radius:3px 3px 3px 0;background:linear-gradient(90deg,#d6c8fa,#c0e6fa)"></div>
<div class="t" style="left:461.3px;top:402.1px;font-size:8.8px;font-weight:bold;color:#15151f;letter-spacing:-0.25px;transform:scaleX(0.908);transform-origin:0 0;">Free</div>
</div></div>
<div class="panel" style="left:508px;top:32px;width:475px;height:415px"><div class="abs" style="left:-508px;top:-32px;width:1280px;height:810px">
<div class="abs" style="left:508px;top:32px;width:475px;height:37px;background:#26262a"></div>
<div class="t" style="left:518.5px;top:43.8px;font-size:12.8px;color:#e2e2e4;letter-spacing:-0.25px;transform:scaleX(0.885);transform-origin:0 0;">Player</div>
<svg style="left:956.500px;top:45.300px" width="12" height="10" viewBox="0 0 12 10" stroke="#48484c" stroke-width="1.500"><path d="M0 1H12M0 5H12M0 9H12"/></svg>
<div class="abs" style="left:656.500px;top:70px;width:177px;height:315px;background:#000"></div>
<svg style="left:705px;top:190px" width="80" height="75" viewBox="0 0 864 810">
<path d="M95 690C97 677 116 669 120 655C124 641 110 626 118 615C126 604 147 599 165 597C183 595 194 601 215 603C236 605 250 608 280 610C310 612 345 609 380 612C415 615 440 624 470 625C500 626 514 618 545 618C576 618 612 623 640 625C668 627 681 624 700 628C719 632 734 635 745 645C756 655 764 668 762 680C760 692 750 704 735 712C720 720 697 716 680 722C663 728 662 741 640 745C618 749 591 740 560 742C529 744 503 756 470 756C437 756 411 743 380 742C349 741 329 751 300 748C271 745 248 728 220 728C192 728 170 749 150 748C130 747 120 736 110 725C100 714 93 703 95 690Z" fill="#dcc3a0"/>
<path d="M140 660C142 648 146 634 160 625C174 616 189 613 215 612C241 611 270 619 300 622C330 625 349 625 380 628C411 631 437 638 470 640C503 642 527 640 560 640C593 640 622 638 650 640C678 642 699 643 715 650C731 657 740 670 735 680C730 690 715 703 690 705C665 707 631 691 600 690C569 689 551 700 520 700C489 700 463 690 430 690C397 690 373 700 340 700C307 700 278 689 250 690C222 691 208 708 190 708C172 708 159 699 150 690C141 681 138 672 140 660Z" fill="#5f8262"/>
<path d="M150 640l40 22M235 632l28 30M340 640l20 22M395 648l40 8M470 672l60 12M575 660l30 8M655 668l35 14M690 650l-8 18" stroke="#1c3a26" stroke-width="15" stroke-linecap="round" fill="none"/>
<path d="M128 612q14-14 30 0M375 608q14-14 30 0M515 620q12-12 24 0M565 624q14-12 28 0M660 628q14-10 28 2" stroke="#eadcc0" stroke-width="11" fill="none" stroke-linecap="round"/>
<rect x="238" y="480" width="87" height="135" fill="#5a2e1e"/>
<rect x="600" y="530" width="55" height="98" fill="#7a4a3c"/>
<path d="M455 165C460 128 481 115 500 100C519 85 541 85 560 85C579 85 588 100 605 100C622 100 629 83 650 85C671 87 698 93 720 110C742 127 759 154 770 180C781 206 781 226 780 250C779 274 760 288 762 310C764 332 784 346 790 370C796 394 800 416 795 440C790 464 777 481 760 500C743 519 722 538 700 545C678 552 658 538 640 538C622 538 615 548 600 545C585 542 575 534 560 520C545 506 536 510 520 470C504 430 482 356 470 300C458 244 450 202 455 165Z" fill="#234a35"/>
<path d="M75 270C73 251 75 232 85 210C95 188 109 172 130 150C151 128 176 105 200 90C224 75 238 73 260 70C282 67 300 68 320 75C340 82 354 93 370 110C386 127 397 148 405 170C413 192 417 211 412 230C407 249 401 262 380 272C359 282 326 279 300 282C274 285 262 282 240 287C218 292 200 304 180 312C160 320 146 331 130 332C114 333 105 326 95 315C85 304 77 289 75 270Z" fill="#6a8c6a"/>
<path d="M140 332C152 324 218 291 240 283C262 275 296 268 305 272C314 276 314 306 305 312C296 318 261 314 240 318C219 322 163 343 150 345C137 347 128 340 140 332Z" fill="#5a2e1e"/>
<path d="M80 430C81 410 84 387 95 370C106 353 121 347 140 337C159 327 178 321 200 317C222 313 242 312 260 317C278 322 290 327 300 342C310 357 312 378 312 400C312 422 308 442 300 460C292 478 288 489 270 500C252 511 226 519 200 522C174 525 150 523 130 515C110 507 99 496 90 480C81 464 79 450 80 430Z" fill="#6a8c6a"/>
<path d="M147 210l34-24M278 152l6 46M352 178l10 22M207 420l24-44M144 446l14-10M188 234l10 4" stroke="#1f3a28" stroke-width="17" stroke-linecap="round" fill="none"/>
<rect x="400" y="470" width="55" height="158" fill="#a07262"/>
<path d="M430 183C442 183 457 190 472 200C487 210 505 226 520 240C535 254 551 268 560 282C569 296 574 311 572 322C570 333 543 338 545 350C547 362 573 378 582 392C591 406 597 420 597 432C597 444 588 458 580 465C572 472 555 466 548 472C541 478 546 493 540 502C534 511 522 525 510 527C498 529 482 519 470 515C458 511 452 502 440 502C428 502 413 516 400 517C387 518 372 508 360 510C348 512 340 529 330 527C320 525 306 510 302 500C298 490 311 480 308 470C305 460 288 452 284 440C280 428 280 412 284 400C288 388 308 377 310 365C312 353 299 341 298 330C297 319 297 308 302 298C307 288 319 280 330 268C341 256 358 236 370 225C382 214 390 207 400 200C410 193 418 183 430 183Z" fill="#a9c98e"/>
<path d="M345 400Q385 365 430 340Q478 355 515 385" stroke="#1f3a28" stroke-width="15" fill="none" stroke-linecap="round" stroke-linejoin="round"/>
</svg>
<div class="abs" style="left:682.500px;top:164.700px;width:126.500px;height:126.800px;border:1.500px solid #e4e4e4"></div>
<div class="abs" style="left:679.2px;top:161.4px;width:8px;height:8px;border-radius:4px;background:#fff"></div>
<div class="abs" style="left:804.3px;top:161.4px;width:8px;height:8px;border-radius:4px;background:#fff"></div>
<div class="abs" style="left:679.2px;top:286.8px;width:8px;height:8px;border-radius:4px;background:#fff"></div>
<div class="abs" style="left:804.3px;top:286.8px;width:8px;height:8px;border-radius:4px;background:#fff"></div>
<svg style="left:738.500px;top:305px" width="14" height="14" viewBox="0 0 14 14" fill="none" stroke="#fff"><circle cx="7" cy="7" r="6.200" stroke-width="1.500"/><path d="M4.300 6.300A2.900 2.900 0 0 1 9.500 5.300M9.700 7.700A2.900 2.900 0 0 1 4.500 8.700" stroke-width="1.300"/><path d="M10.300 3.800L9.800 5.700L8 5.300M3.700 10.200L4.200 8.300L6 8.700" stroke-width="1.100"/></svg>
<div class="t" style="left:514.7px;top:419.0px;font-size:11.5px;color:#1ab4c4;letter-spacing:-0.25px;transform:scaleX(0.991);transform-origin:0 0;">00:00:00:00</div>
<div class="t" style="left:576.2px;top:419.5px;font-size:11.5px;color:#3c3c40;letter-spacing:0.00px;">/</div>
<div class="t" style="left:583.6px;top:419.0px;font-size:11.5px;color:#c6c6c8;letter-spacing:-0.25px;transform:scaleX(0.985);transform-origin:0 0;">00:00:03:00</div>
<svg style="left:650.800px;top:417.600px" width="20" height="14" viewBox="0 0 20 14" fill="#363639"><rect x="0" y="0.0" width="8.500" height="1.800"/><rect x="11" y="0.0" width="8.700" height="1.800"/><rect x="0" y="3.0" width="8.500" height="1.800"/><rect x="11" y="3.0" width="8.700" height="1.800"/><rect x="0" y="5.9" width="8.500" height="1.800"/><rect x="11" y="5.9" width="8.700" height="1.800"/><rect x="0" y="8.9" width="8.500" height="1.800"/><rect x="11" y="8.9" width="8.700" height="1.800"/><rect x="0" y="11.8" width="8.500" height="1.800"/><rect x="11" y="11.8" width="8.700" height="1.800"/></svg>
<svg style="left:741.500px;top:419.200px" width="9" height="10.600" viewBox="0 0 9 10.600"><path d="M0.300 0.300L8.800 5.300L0.300 10.300Z" fill="#dcdcde"/></svg>
<svg style="left:899.800px;top:417px" width="15.400" height="15" viewBox="0 0 15.400 15" fill="none" stroke="#d0d0d2" stroke-width="1.300"><path d="M0.700 4V0.700H4M11.400 0.700H14.700V4M14.700 11V14.300H11.400M4 14.300H0.700V11"/><circle cx="7.500" cy="7.300" r="3.600"/><path d="M10.100 9.900L12.300 12.100"/></svg>
<div class="abs" style="left:927px;top:418px;width:22px;height:13px;border:1px solid #bcbcbe;border-radius:2px;background:#0f0f11"></div>
<div class="t" style="left:928.8px;top:420.3px;font-size:10.2px;color:#cacacc;letter-spacing:-0.25px;transform:scaleX(0.953);transform-origin:0 0;">9:16</div>
<div class="abs" style="left:955.500px;top:421px;width:1px;height:7px;background:#2a2a2d"></div>
<svg style="left:963.800px;top:418.700px" width="12" height="12" viewBox="0 0 12 12" fill="none" stroke="#d0d0d2" stroke-width="1.300"><path d="M0.700 4V0.700H4M8 11.300H11.300V8M7.500 0.700H11.300V4.500M4.500 11.300H0.700V7.500M11.300 0.700L7 5M0.700 11.300L5 7" stroke-width="1.200"/></svg>
</div></div>
<div class="panel" style="left:990px;top:32px;width:282px;height:415px"><div class="abs" style="left:-990px;top:-32px;width:1280px;height:810px">
<div class="abs" style="left:990px;top:32px;width:282px;height:37px;background:#26262a"></div>
<div class="abs" style="left:1000px;top:69px;width:261px;height:1px;background:#27272a"></div>
<div class="t" style="left:999.0px;top:44.9px;font-size:12.5px;font-weight:bold;color:#17b8c8;letter-spacing:-0.25px;transform:scaleX(0.881);transform-origin:0 0;">Stickers</div>
<div class="t" style="left:1063.7px;top:44.9px;font-size:12.5px;font-weight:bold;color:#d6d6d8;letter-spacing:-0.25px;transform:scaleX(0.947);transform-origin:0 0;">Animation</div>
<div class="t" style="left:1143.0px;top:44.9px;font-size:12.5px;font-weight:bold;color:#d6d6d8;letter-spacing:-0.25px;transform:scaleX(0.906);transform-origin:0 0;">Tracking</div>
<div class="t" style="left:1000.4px;top:87.3px;font-size:12.5px;font-weight:bold;color:#f2f2f4;letter-spacing:-0.25px;transform:scaleX(0.915);transform-origin:0 0;">Transform</div>
<svg style="left:1059px;top:92.200px" width="6.600" height="3.400" viewBox="0 0 6.600 3.400"><path d="M0 3.400L3.300 0L6.600 3.400Z" fill="#4c4c50"/></svg>
<svg style="left:1210.500px;top:87.700px" width="12" height="12" viewBox="0 0 12 12" fill="none" stroke="#77777b" stroke-width="1.150"><path d="M2.300 2.600A5 5 0 1 1 1.100 7.200"/><path d="M2.200 0.400V2.900H4.700"/></svg>
<svg style="left:1232.1px;top:87.2px" width="30" height="12" viewBox="0 0 30 12" fill="none"><path d="M15 0.800L20.200 6L15 11.200L9.800 6Z" stroke="#d4d4d6" stroke-width="1.150" stroke-linejoin="miter"/><path d="M4 2.800L1.800 6L4 9.200M26 2.800L28.200 6L26 9.200" stroke="#2c2c30" stroke-width="1.100"/></svg>
<div class="t" style="left:1000.4px;top:118.8px;font-size:12.3px;color:#d2d2d4;letter-spacing:-0.25px;transform:scaleX(0.860);transform-origin:0 0;">Scale</div>
<div class="abs" style="left:1000px;top:139.900px;width:149px;height:2px;background:#36363a;border-radius:1px"></div>
<div class="abs" style="left:1000px;top:139.900px;width:30px;height:2px;background:#f4f4f4;border-radius:1px"></div>
<div class="abs" style="left:1028px;top:136px;width:7.400px;height:10.600px;background:#fafafa;border-radius:2.500px"></div>
<div class="inp" style="left:1165px;top:131.600px;width:48.200px;height:19.400px"></div>
<div class="t" style="left:1175.7px;top:135.2px;font-size:12.3px;color:#e8e8ea;letter-spacing:-0.25px;transform:scaleX(0.922);transform-origin:0 0;">100%</div>
<div class="inp" style="left:1215.2px;top:131.6px;width:14.1px;height:19.4px"></div><svg style="left:1218.8px;top:135.8px" width="7" height="11" viewBox="0 0 7 11" fill="none" stroke="#a8a8ac" stroke-width="1.200"><path d="M0.600 3.800L3.500 0.900L6.400 3.800M0.600 7.200L3.500 10.100L6.400 7.200"/></svg>
<svg style="left:1232.1px;top:135.2px" width="30" height="12" viewBox="0 0 30 12" fill="none"><path d="M15 0.800L20.200 6L15 11.200L9.800 6Z" stroke="#d4d4d6" stroke-width="1.150" stroke-linejoin="miter"/><path d="M4 2.800L1.800 6L4 9.200M26 2.800L28.200 6L26 9.200" stroke="#2c2c30" stroke-width="1.100"/></svg>
<div class="t" style="left:1000.4px;top:168.9px;font-size:12.3px;color:#d2d2d4;letter-spacing:-0.25px;transform:scaleX(0.961);transform-origin:0 0;">Uniform scale</div>
<div class="abs" style="left:1229.500px;top:168px;width:32px;height:14.300px;background:#11b7c8;border-radius:7.200px"></div>
<div class="abs" style="left:1250.700px;top:171.600px;width:7.200px;height:7.200px;background:#fff;border-radius:3.600px"></div>
<div class="t" style="left:1000.4px;top:202.8px;font-size:12.3px;color:#d2d2d4;letter-spacing:-0.25px;transform:scaleX(0.959);transform-origin:0 0;">Position</div>
<div class="inp" style="left:1060.500px;top:198.800px;width:60.500px;height:19.700px"></div>
<div class="t" style="left:1067.5px;top:203.3px;font-size:12.3px;color:#6c6c70;letter-spacing:0.00px;">X</div>
<div class="t" style="left:1096.9px;top:203.3px;font-size:12.3px;color:#e8e8ea;letter-spacing:0.00px;">0</div>
<div class="inp" style="left:1126.0px;top:198.8px;width:14.5px;height:19.7px"></div><svg style="left:1129.8px;top:203.2px" width="7" height="11" viewBox="0 0 7 11" fill="none" stroke="#a8a8ac" stroke-width="1.200"><path d="M0.600 3.800L3.500 0.900L6.400 3.800M0.600 7.200L3.500 10.100L6.400 7.200"/></svg>
<div class="inp" style="left:1169px;top:198.800px;width:60.500px;height:19.700px"></div>
<div class="t" style="left:1175.7px;top:203.3px;font-size:12.3px;color:#6c6c70;letter-spacing:0.00px;">Y</div>
<div class="t" style="left:1205.2px;top:203.3px;font-size:12.3px;color:#e8e8ea;letter-spacing:0.00px;">0</div>
<div class="inp" style="left:1234.5px;top:198.8px;width:14.4px;height:19.7px"></div><svg style="left:1238.2px;top:203.2px" width="7" height="11" viewBox="0 0 7 11" fill="none" stroke="#a8a8ac" stroke-width="1.200"><path d="M0.600 3.800L3.500 0.900L6.400 3.800M0.600 7.200L3.500 10.100L6.400 7.200"/></svg>
<div class="abs" style="left:1240.500px;top:199px;width:9px;height:19px;background:#2a2a2e;border-radius:0 4px 4px 0"></div>
<svg style="left:1232.1px;top:202.7px" width="30" height="12" viewBox="0 0 30 12" fill="none"><path d="M15 0.800L20.200 6L15 11.200L9.800 6Z" stroke="#d4d4d6" stroke-width="1.150" stroke-linejoin="miter"/><path d="M4 2.800L1.800 6L4 9.200M26 2.800L28.200 6L26 9.200" stroke="#2c2c30" stroke-width="1.100"/></svg>
<div class="t" style="left:1000.4px;top:236.5px;font-size:12.3px;color:#d2d2d4;letter-spacing:-0.25px;transform:scaleX(0.932);transform-origin:0 0;">Rotate</div>
<div class="inp" style="left:1060.500px;top:232.500px;width:60.500px;height:19.600px"></div>
<div class="t" style="left:1085.4px;top:236.5px;font-size:12.3px;color:#e8e8ea;letter-spacing:-0.25px;transform:scaleX(0.938);transform-origin:0 0;">0°</div>
<div class="inp" style="left:1122.6px;top:232.5px;width:14.4px;height:19.6px"></div><svg style="left:1126.3px;top:236.8px" width="7" height="11" viewBox="0 0 7 11" fill="none" stroke="#a8a8ac" stroke-width="1.200"><path d="M0.600 3.800L3.500 0.900L6.400 3.800M0.600 7.200L3.500 10.100L6.400 7.200"/></svg>
<div class="abs" style="left:1166.600px;top:234px;width:16.800px;height:16.800px;border-radius:8.400px;background:#2d2d31;border:1px solid #38383c"></div>
<div class="abs" style="left:1177.300px;top:241.700px;width:4px;height:1.400px;background:#f0f0f0"></div>
<div class="abs" style="left:1182.500px;top:241.200px;width:1.800px;height:2.600px;background:#11b7c8;border-radius:1px"></div>
<svg style="left:1232.1px;top:236.4px" width="30" height="12" viewBox="0 0 30 12" fill="none"><path d="M15 0.800L20.200 6L15 11.200L9.800 6Z" stroke="#d4d4d6" stroke-width="1.150" stroke-linejoin="miter"/><path d="M4 2.800L1.800 6L4 9.200M26 2.800L28.200 6L26 9.200" stroke="#2c2c30" stroke-width="1.100"/></svg>
<div class="inp" style="left:1000px;top:266.700px;width:256px;height:19.200px"></div>
<svg style="left:1010.4px;top:271px" width="12" height="11" viewBox="0 0 12 11" fill="#f0f0f2"><rect x="0.500" y="0" width="1.300" height="11"/><rect x="2.800" y="2.300" width="8.500" height="1.400"/><rect x="2.800" y="6.300" width="5.500" height="1.400"/></svg>
<svg style="left:1041.7px;top:271px" width="12" height="11" viewBox="0 0 12 11" fill="#f0f0f2"><rect x="5.350" y="0" width="1.300" height="11"/><rect x="0.800" y="2.800" width="10.400" height="1.400"/><rect x="2.300" y="6.600" width="7.400" height="1.400"/></svg>
<svg style="left:1073.2px;top:271px" width="12" height="11" viewBox="0 0 12 11" fill="#f0f0f2"><rect x="10.200" y="0" width="1.300" height="11"/><rect x="0.700" y="2.300" width="8.500" height="1.400"/><rect x="3.700" y="6.300" width="5.500" height="1.400"/></svg>
<svg style="left:1103.6px;top:271px" width="12" height="11" viewBox="0 0 12 11" fill="#f0f0f2"><rect x="0.500" y="0.300" width="11" height="1.300"/><rect x="3" y="2.600" width="1.400" height="8.200"/><rect x="7" y="2.600" width="1.400" height="4.800"/></svg>
<svg style="left:1135.1px;top:271px" width="12" height="11" viewBox="0 0 12 11" fill="#f0f0f2"><rect x="0.500" y="4.850" width="11" height="1.300"/><rect x="3.400" y="0.500" width="1.400" height="10"/><rect x="7.400" y="2" width="1.400" height="7"/></svg>
<svg style="left:1166.9px;top:271px" width="12" height="11" viewBox="0 0 12 11" fill="#f0f0f2"><rect x="0.500" y="9.700" width="11" height="1.300"/><rect x="3" y="0.500" width="1.400" height="8.200"/><rect x="7" y="4" width="1.400" height="4.700"/></svg>
<div class="abs" style="left:1194px;top:268.500px;width:1px;height:15.500px;background:#3a3a3e"></div>
<svg style="left:1207.6px;top:271px" width="12" height="11" viewBox="0 0 12 11" fill="#3e3e42"><rect x="1.500" y="0.500" width="1.200" height="10"/><rect x="9.300" y="0.500" width="1.200" height="10"/><rect x="5.400" y="2.500" width="1.300" height="6"/></svg>
<svg style="left:1238.9px;top:271px" width="12" height="11" viewBox="0 0 12 11" fill="#3e3e42"><rect x="1" y="0.800" width="10" height="1.200"/><rect x="1" y="9" width="10" height="1.200"/><rect x="3" y="4.900" width="6" height="1.300"/></svg>
</div></div>
<div class="panel" style="left:8px;top:453px;width:1264px;height:349px"><div class="abs" style="left:-8px;top:-453px;width:1280px;height:810px">
<div class="abs" style="left:8px;top:453px;width:1264px;height:28px;background:#26262a"></div>
<div class="abs" style="left:8px;top:481px;width:1264px;height:1px;background:#18181a"></div>
<svg style="left:16.500px;top:460.500px" width="12" height="15" viewBox="0 0 12 15" fill="none" stroke="#e6e6e8" stroke-width="1.300" stroke-linejoin="round" stroke-linecap="round"><path d="M1 0.700L1.300 11.800L4.300 9.900L7.300 13.700L9.500 12L6.900 8.400L10.800 7.200Z" stroke-width="1.500"/></svg>
<svg style="left:39.300px;top:466px" width="7" height="4.300" viewBox="0 0 7 4.300" fill="none" stroke="#8a8a8e" stroke-width="1.300"><path d="M0.500 0.500L3.500 3.500L6.500 0.500"/></svg>
<div class="abs" style="left:58px;top:460.500px;width:1px;height:14px;background:#38383c"></div>
<svg style="left:70px;top:460.700px" width="12.500" height="12" viewBox="0 0 12.500 12" fill="none" stroke="#e6e6e8" stroke-width="1.300" stroke-linejoin="round" stroke-linecap="round"><path d="M1.200 3.300H7.700Q11.700 3.300 11.700 7.100Q11.700 10.900 7.700 10.900H1.800M3.400 1L1.100 3.300L3.400 5.600"/></svg>
<svg style="left:102.500px;top:460.700px" width="12.500" height="12" viewBox="0 0 12.500 12" fill="none" stroke="#3a3a3e" stroke-width="1.300" stroke-linejoin="round" stroke-linecap="round"><path d="M11.300 3.300H4.800Q0.800 3.300 0.800 7.100Q0.800 10.900 4.800 10.900H10.700M9.100 1L11.400 3.300L9.100 5.600"/></svg>
<svg style="left:136px;top:460.800px" width="9.500" height="12.300" viewBox="0 0 9.500 11.500" preserveAspectRatio="none" fill="none" stroke="#e6e6e8" stroke-width="1.300"><path d="M0.300 0.700H3V10.800H0.300M9.200 0.700H6.500V10.800H9.200"/></svg>
<svg style="left:168px;top:460.800px" width="9.500" height="12.300" viewBox="0 0 9.500 11.500" preserveAspectRatio="none" fill="none" stroke="#e6e6e8" stroke-width="1.300"><path d="M0.300 0.700H3M3 10.800H0.300M9.200 0.700H6.500V10.800H9.200"/><path d="M3 0.700V10.800" stroke-dasharray="1.1 0.9" stroke-width="1.700"/></svg>
<svg style="left:200px;top:460.800px" width="9.500" height="12.300" viewBox="0 0 9.500 11.500" preserveAspectRatio="none" fill="none" stroke="#e6e6e8" stroke-width="1.300"><path d="M0.300 0.700H3V10.800H0.300M9.200 0.700H6.500M6.500 10.800H9.200"/><path d="M6.500 0.700V10.800" stroke-dasharray="1.1 0.9" stroke-width="1.700"/></svg>
<svg style="left:230.300px;top:460.700px" width="12" height="12" viewBox="0 0 12 12" fill="none" stroke="#e6e6e8" stroke-width="1.300" stroke-linejoin="round"><path d="M0.300 2.400H11.700M6 2.400V0.400M1.900 2.400V11.300H10.100V2.400" stroke-width="1.400"/></svg>
<svg style="left:265px;top:460.300px" width="14.500" height="12.800" viewBox="0 0 14.500 12.500" fill="none" stroke="#e6e6e8" stroke-width="1.200" stroke-linejoin="round"><path d="M6 0.800V11.800H0.800ZM8.500 0.800V11.800H13.700Z"/></svg>
<svg style="left:920.300px;top:459.400px" width="11" height="15.500" viewBox="0 0 11 15.500" fill="none" stroke="#e6e6e8" stroke-width="1.250" stroke-linecap="round"><rect x="3.300" y="0.700" width="4.400" height="8.300" rx="2.200"/><path d="M0.800 7Q0.800 11.600 5.500 11.600Q10.200 11.600 10.200 7M5.500 11.600V14.600M3 14.700H8"/><path d="M4.500 3H6.500M4.500 5H6.500" stroke-width="0.800"/></svg>
<div class="abs" style="left:950px;top:461px;width:1px;height:13px;background:#2c2c30"></div>
<div class="abs" style="left:965.0px;top:456.800px;width:21.700px;height:20.800px;background:#151518;border-radius:3px"></div>
<div class="abs" style="left:1000.7px;top:456.800px;width:21.700px;height:20.800px;background:#151518;border-radius:3px"></div>
<div class="abs" style="left:1036.5px;top:456.800px;width:21.700px;height:20.800px;background:#151518;border-radius:3px"></div>
<svg style="left:968.500px;top:463.300px" width="16" height="7.400" viewBox="0 0 14 7" preserveAspectRatio="none"><rect x="0" y="0.600" width="4.300" height="5.800" rx="0.800" fill="#13b9c9"/><path d="M8 0.800H12.500Q13.300 0.800 13.300 1.600V5.400Q13.300 6.200 12.500 6.200H8" fill="#13b9c9"/><path d="M5.200 3.500H10.500M6.800 1.900L5.200 3.500L6.800 5.100" stroke="#13b9c9" stroke-width="1" fill="none"/><path d="M8.300 3.500H11" stroke="#151518" stroke-width="1"/></svg>
<svg style="left:1003.700px;top:459.300px" width="16" height="16" viewBox="0 0 15 15.500" preserveAspectRatio="none"><rect x="0.500" y="5" width="14" height="5.500" rx="0.800" fill="#13b9c9"/><rect x="6.800" y="5.800" width="1.400" height="3.900" fill="#151518"/><path d="M7.500 0.500V3M3.800 1.500L5 3.300M11.200 1.500L10 3.300M7.500 15V12.500M3.800 14L5 12.200M11.200 14L10 12.200" stroke="#13b9c9" stroke-width="1" fill="none"/></svg>
<svg style="left:1039.300px;top:463.300px" width="16" height="7.400" viewBox="0 0 14.500 7" preserveAspectRatio="none"><rect x="0.300" y="0.500" width="13.900" height="6" rx="0.900" fill="#13b9c9"/><path d="M5.800 2H4.200Q3 2 3 3.500Q3 5 4.200 5H5.800M8.700 2H10.300Q11.500 2 11.500 3.500Q11.500 5 10.300 5H8.700M5.300 3.500H9.200" stroke="#151518" stroke-width="1" fill="none"/></svg>
<svg style="left:1074.700px;top:461px" width="16.500" height="13" viewBox="0 0 16.500 13" fill="none" stroke="#e6e6e8" stroke-width="1.250"><path d="M8.250 0V13M6 3.600H1.500Q0.700 3.600 0.700 4.400V8.600Q0.700 9.400 1.500 9.400H6M10.500 3.600H15Q15.800 3.600 15.800 4.400V8.600Q15.800 9.400 15 9.400H10.500"/></svg>
<div class="abs" style="left:1100.500px;top:461px;width:1px;height:13px;background:#2c2c30"></div>
<svg style="left:1110.800px;top:461px" width="16" height="12.500" viewBox="0 0 16 12.500" fill="none" stroke="#e6e6e8" stroke-width="1.200"><path d="M9 8.800H1.300Q0.600 8.800 0.600 8.100V1.300Q0.600 0.600 1.300 0.600H14Q14.700 0.600 14.700 1.300V5.500"/><path d="M3 0.600V3M5.500 0.600V2.200M8 0.600V3M10.500 0.600V2.200M13 0.600V3" stroke-width="0.900"/><circle cx="11.600" cy="8.300" r="2.600"/><path d="M13.500 10.200L15.300 12"/></svg>
<svg style="left:1138.300px;top:461.300px" width="12" height="12" viewBox="0 0 12 12" fill="none" stroke="#e6e6e8" stroke-width="1.200"><circle cx="5.700" cy="5.700" r="5"/><path d="M3.300 5.700H8.100M9.400 9.400L11.300 11.300"/></svg>
<div class="abs" style="left:1158.500px;top:466.200px;width:85px;height:1.600px;background:#34343a;border-radius:1px"></div>
<div class="abs" style="left:1158.500px;top:466.100px;width:12px;height:1.800px;background:#f4f4f4;border-radius:1px"></div>
<div class="abs" style="left:1168.700px;top:461.700px;width:7px;height:11px;background:#fafafa;border-radius:2.500px"></div>
<svg style="left:1252px;top:461.300px" width="12" height="12" viewBox="0 0 12 12" fill="none" stroke="#e6e6e8" stroke-width="1.200"><circle cx="5.700" cy="5.700" r="5"/><path d="M3.300 5.700H8.100M5.700 3.300V8.100M9.400 9.400L11.300 11.300"/></svg>
<div class="abs" style="left:163px;top:483px;width:393.500px;height:1px;background:#4a3f12"></div>
<div class="t" style="left:166.8px;top:484.9px;font-size:10.6px;color:#5a5a5e;letter-spacing:-0.25px;transform:scaleX(0.960);transform-origin:0 0;">00:00</div>
<div class="abs" style="left:205.6px;top:485.500px;width:1px;height:5px;background:#303033"></div>
<div class="abs" style="left:227.4px;top:485.500px;width:1px;height:5px;background:#303033"></div>
<div class="abs" style="left:249.2px;top:485.500px;width:1px;height:5px;background:#303033"></div>
<div class="abs" style="left:271.0px;top:485.500px;width:1px;height:5px;background:#303033"></div>
<div class="abs" style="left:292.8px;top:485.500px;width:1px;height:5px;background:#303033"></div>
<div class="abs" style="left:314.5px;top:485.500px;width:1px;height:5px;background:#303033"></div>
<div class="abs" style="left:336.3px;top:485.500px;width:1px;height:5px;background:#303033"></div>
<div class="abs" style="left:358.1px;top:485.500px;width:1px;height:5px;background:#303033"></div>
<div class="abs" style="left:379.9px;top:485.500px;width:1px;height:5px;background:#303033"></div>
<div class="abs" style="left:401.7px;top:485.500px;width:1px;height:5px;background:#303033"></div>
<div class="abs" style="left:423.5px;top:486.300px;width:1.100px;height:9.200px;background:#58585c"></div>
<div class="t" style="left:427.8px;top:484.9px;font-size:10.6px;color:#5a5a5e;letter-spacing:-0.25px;transform:scaleX(0.999);transform-origin:0 0;">00:02</div>
<div class="abs" style="left:467.1px;top:485.500px;width:1px;height:5px;background:#303033"></div>
<div class="abs" style="left:488.9px;top:485.500px;width:1px;height:5px;background:#303033"></div>
<div class="abs" style="left:510.7px;top:485.500px;width:1px;height:5px;background:#303033"></div>
<div class="abs" style="left:532.5px;top:485.500px;width:1px;height:5px;background:#303033"></div>
<div class="abs" style="left:554.2px;top:485.500px;width:1px;height:5px;background:#303033"></div>
<div class="abs" style="left:576.0px;top:485.500px;width:1px;height:5px;background:#303033"></div>
<div class="abs" style="left:597.8px;top:485.500px;width:1px;height:5px;background:#303033"></div>
<div class="abs" style="left:619.6px;top:485.500px;width:1px;height:5px;background:#303033"></div>
<div class="abs" style="left:641.4px;top:485.500px;width:1px;height:5px;background:#303033"></div>
<div class="abs" style="left:663.2px;top:485.500px;width:1px;height:5px;background:#303033"></div>
<div class="abs" style="left:685.0px;top:486.300px;width:1.100px;height:9.200px;background:#58585c"></div>
<div class="t" style="left:689.3px;top:484.9px;font-size:10.6px;color:#5a5a5e;letter-spacing:-0.25px;transform:scaleX(0.999);transform-origin:0 0;">00:04</div>
<div class="abs" style="left:728.6px;top:485.500px;width:1px;height:5px;background:#303033"></div>
<div class="abs" style="left:750.4px;top:485.500px;width:1px;height:5px;background:#303033"></div>
<div class="abs" style="left:772.2px;top:485.500px;width:1px;height:5px;background:#303033"></div>
<div class="abs" style="left:794.0px;top:485.500px;width:1px;height:5px;background:#303033"></div>
<div class="abs" style="left:815.8px;top:485.500px;width:1px;height:5px;background:#303033"></div>
<div class="abs" style="left:837.5px;top:485.500px;width:1px;height:5px;background:#303033"></div>
<div class="abs" style="left:859.3px;top:485.500px;width:1px;height:5px;background:#303033"></div>
<div class="abs" style="left:881.1px;top:485.500px;width:1px;height:5px;background:#303033"></div>
<div class="abs" style="left:902.9px;top:485.500px;width:1px;height:5px;background:#303033"></div>
<div class="abs" style="left:924.7px;top:485.500px;width:1px;height:5px;background:#303033"></div>
<div class="abs" style="left:946.5px;top:486.300px;width:1.100px;height:9.200px;background:#58585c"></div>
<div class="t" style="left:950.8px;top:484.9px;font-size:10.6px;color:#5a5a5e;letter-spacing:-0.25px;transform:scaleX(0.999);transform-origin:0 0;">00:06</div>
<div class="abs" style="left:990.1px;top:485.500px;width:1px;height:5px;background:#303033"></div>
<div class="abs" style="left:1011.9px;top:485.500px;width:1px;height:5px;background:#303033"></div>
<div class="abs" style="left:1033.7px;top:485.500px;width:1px;height:5px;background:#303033"></div>
<div class="abs" style="left:1055.5px;top:485.500px;width:1px;height:5px;background:#303033"></div>
<div class="abs" style="left:1077.2px;top:485.500px;width:1px;height:5px;background:#303033"></div>
<div class="abs" style="left:1099.0px;top:485.500px;width:1px;height:5px;background:#303033"></div>
<div class="abs" style="left:1120.8px;top:485.500px;width:1px;height:5px;background:#303033"></div>
<div class="abs" style="left:1142.6px;top:485.500px;width:1px;height:5px;background:#303033"></div>
<div class="abs" style="left:1164.4px;top:485.500px;width:1px;height:5px;background:#303033"></div>
<div class="abs" style="left:1186.2px;top:485.500px;width:1px;height:5px;background:#303033"></div>
<div class="abs" style="left:1208.0px;top:486.300px;width:1.100px;height:9.200px;background:#58585c"></div>
<div class="t" style="left:1212.3px;top:484.9px;font-size:10.6px;color:#5a5a5e;letter-spacing:-0.25px;transform:scaleX(0.999);transform-origin:0 0;">00:08</div>
<div class="abs" style="left:1251.6px;top:485.500px;width:1px;height:5px;background:#303033"></div>
<div class="abs" style="left:117.500px;top:506px;width:1px;height:296px;background:#222225"></div>
<div class="abs" style="left:8px;top:591.300px;width:109.500px;height:21.200px;background:#212124"></div>
<div class="abs" style="left:8px;top:615.500px;width:109.500px;height:67.500px;background:#212124"></div>
<div class="abs" style="left:160px;top:591.300px;width:1107px;height:21.500px;background:#252526"></div>
<div class="abs" style="left:161px;top:616px;width:1095px;height:67.300px;background:#212122;border-radius:8px"></div>
<div class="abs" style="left:160px;top:592.500px;width:396.800px;height:18.600px;background:#d8932c;border:solid #f8f2e8;border-width:1.500px 2.500px;border-radius:3.500px"></div>
<svg style="left:169.200px;top:597.500px" width="6.400" height="6.800" viewBox="0 0 66 70"><ellipse cx="20" cy="28" rx="16" ry="18" fill="#688c68"/><ellipse cx="46" cy="30" rx="14" ry="19" fill="#234a33"/><ellipse cx="33" cy="34" rx="12" ry="14" fill="#a9c98d"/><ellipse cx="32" cy="56" rx="25" ry="6" fill="#c8b890"/></svg>
<svg style="left:14.700px;top:596.700px" width="10.800" height="10.800" viewBox="0 0 10.800 10.800" fill="none" stroke="#6a6a6e" stroke-width="1.100"><circle cx="5.400" cy="5.400" r="4.800"/><path d="M5.400 0.600V5.400L9 8.200"/></svg>
<svg style="left:37.800px;top:598.0px" width="7.800" height="8" viewBox="0 0 7.800 8" fill="none" stroke="#e6e6e8" stroke-width="1.400"><rect x="0.700" y="3.700" width="6.400" height="3.600" rx="0.900"/><path d="M2.100 3.700V2.500Q2.100 0.700 3.900 0.700Q5.700 0.700 5.700 2.500V3.700"/><path d="M2.500 5.500H5.300" stroke-width="1.200"/></svg>
<svg style="left:58px;top:598.8px" width="10.200" height="6.800" viewBox="0 0 10.200 6.800" fill="none" stroke="#e6e6e8" stroke-width="1.300"><path d="M0.700 3.400Q2.200 0.700 5.100 0.700Q8 0.700 9.500 3.400Q8 6.100 5.100 6.100Q2.200 6.100 0.700 3.400Z"/><circle cx="5.100" cy="3.400" r="1.700" fill="#e6e6e8" stroke="none"/></svg>
<svg style="left:15px;top:645.700px" width="11" height="8.900" preserveAspectRatio="none" viewBox="0 0 11 9.300" fill="none" stroke="#6a6a6e" stroke-width="1.100"><rect x="0.600" y="0.600" width="9.800" height="8.100" rx="0.800"/><path d="M4.300 3V6.300L7 4.650Z" fill="#6a6a6e" stroke="none"/></svg>
<svg style="left:37.800px;top:646.0px" width="7.800" height="8" viewBox="0 0 7.800 8" fill="none" stroke="#e6e6e8" stroke-width="1.400"><rect x="0.700" y="3.700" width="6.400" height="3.600" rx="0.900"/><path d="M2.100 3.700V2.500Q2.100 0.700 3.900 0.700Q5.700 0.700 5.700 2.500V3.700"/><path d="M2.500 5.500H5.300" stroke-width="1.200"/></svg>
<svg style="left:58px;top:646.8px" width="10.200" height="6.800" viewBox="0 0 10.200 6.800" fill="none" stroke="#e6e6e8" stroke-width="1.300"><path d="M0.700 3.400Q2.200 0.700 5.100 0.700Q8 0.700 9.500 3.400Q8 6.100 5.100 6.100Q2.200 6.100 0.700 3.400Z"/><circle cx="5.100" cy="3.400" r="1.700" fill="#e6e6e8" stroke="none"/></svg>
<svg style="left:79.700px;top:645.700px" width="10" height="9" viewBox="0 0 10 9" fill="none" stroke="#e6e6e8" stroke-width="1.050" stroke-linejoin="round"><path d="M0.600 3.200H2.300L4.800 0.900V8.100L2.300 5.800H0.600Z"/><path d="M6.300 3Q7.100 4.500 6.300 6M7.900 1.600Q9.700 4.500 7.900 7.400" stroke-linecap="round"/></svg>
<svg style="left:101.500px;top:648.800px" width="8.600" height="2" viewBox="0 0 8.600 2" fill="#e6e6e8"><circle cx="1" cy="1" r="0.900"/><circle cx="4.300" cy="1" r="0.900"/><circle cx="7.600" cy="1" r="0.900"/></svg>
<div class="abs" style="left:122.200px;top:633.300px;width:33.300px;height:33.400px;background:#2a2a2d;border:1px dashed #3e3e42;border-radius:4px"></div>
<svg style="left:134px;top:638.500px" width="9.500" height="10.500" viewBox="0 0 9.500 10.500" fill="none" stroke="#e0e0e2" stroke-width="1.100" stroke-linejoin="round"><path d="M5.800 0.800L8 3L3.500 7.500H1.300V5.300Z"/><path d="M0.500 9.800H9" stroke-width="1.100"/></svg>
<div class="t" style="left:125.0px;top:650.7px;font-size:11.3px;color:#c8c8ca;letter-spacing:-0.25px;transform:scaleX(0.937);transform-origin:0 0;">Cover</div>
<svg style="left:184.100px;top:643.800px" width="13.900" height="11.200" viewBox="0 0 13.900 11.200"><rect x="0" y="0" width="13.900" height="11.200" rx="1.600" fill="#b2b2b4"/><rect x="3.800" y="1.500" width="6.300" height="3.200" fill="#222225"/><rect x="3.800" y="6.500" width="6.300" height="3.200" fill="#222225"/><path d="M0.800 2.200H2.600M0.800 4.400H2.600M0.800 6.700H2.600M0.800 9H2.600M11.300 2.200H13.100M11.300 4.400H13.100M11.300 6.700H13.100M11.300 9H13.100" stroke="#77777a" stroke-width="0.800"/></svg>
<div class="abs" style="left:162px;top:490px;width:1.300px;height:300px;background:#f2f2f2"></div>
<svg style="left:158.200px;top:482.200px" width="9" height="12.500" viewBox="0 0 9 12.500"><path d="M2.200 0.800H6.800Q8.200 0.800 8.200 2.200V8.300Q8.200 9.300 7.300 10L4.500 11.800L1.700 10Q0.800 9.300 0.800 8.300V2.200Q0.800 0.800 2.200 0.800Z" fill="#1b1b1d" stroke="#fafafa" stroke-width="1.500" stroke-linejoin="round"/></svg>
<div class="abs" style="left:120px;top:794.600px;width:1146px;height:5.400px;background:#38383c;border-radius:2.700px"></div>
</div></div>
</body></html>
